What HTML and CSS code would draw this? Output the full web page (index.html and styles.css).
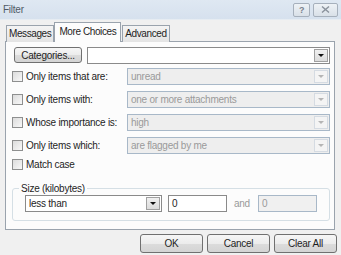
FILE: index.html
```html
<!DOCTYPE html>
<html lang="en">
<head>
  <meta charset="UTF-8" />
  <title>Filter</title>
  <link rel="stylesheet" href="styles.css">
</head>
<body>
  <div class="window">
    <header class="titlebar">
      <span class="title">Filter</span>
      <div class="caption-btns">
        <span class="cap-btn help">?</span>
        <span class="cap-btn close">
          <svg width="9" height="7" viewBox="0 0 9 7"><path d="M1 0.5 L8 6.5 M8 0.5 L1 6.5" stroke="#8a929c" stroke-width="1.4" fill="none"/></svg>
        </span>
      </div>
    </header>

    <div class="content">
      <ul class="tabs">
        <li class="tab">Messages</li>
        <li class="tab active">More Choices</li>
        <li class="tab">Advanced</li>
      </ul>

      <section class="panel">
        <div class="cat-row">
          <button class="btn small">Categories...</button>
          <div class="combo enabled">
            <span class="combo-text"></span>
            <span class="arrow dark"></span>
          </div>
        </div>

        <div class="row">
          <label class="check"><span class="box"></span>Only items that are:</label>
          <div class="combo disabled"><span class="combo-text">unread</span><span class="arrow"></span></div>
        </div>
        <div class="row">
          <label class="check"><span class="box"></span>Only items with:</label>
          <div class="combo disabled"><span class="combo-text">one or more attachments</span><span class="arrow"></span></div>
        </div>
        <div class="row">
          <label class="check"><span class="box"></span>Whose importance is:</label>
          <div class="combo disabled"><span class="combo-text">high</span><span class="arrow"></span></div>
        </div>
        <div class="row">
          <label class="check"><span class="box"></span>Only items which:</label>
          <div class="combo disabled"><span class="combo-text">are flagged by me</span><span class="arrow"></span></div>
        </div>
        <div class="row short">
          <label class="check"><span class="box"></span>Match case</label>
        </div>

        <fieldset class="group">
          <legend>Size (kilobytes)</legend>
          <div class="size-row">
            <div class="combo enabled size-combo"><span class="combo-text">less than</span><span class="arrow dark"></span></div>
            <div class="field">0</div>
            <span class="and">and</span>
            <div class="field off">0</div>
          </div>
        </fieldset>
      </section>

      <div class="actions">
        <button class="btn">OK</button>
        <button class="btn">Cancel</button>
        <button class="btn">Clear All</button>
      </div>
    </div>
  </div>
</body>
</html>
```

FILE: styles.css
```css
* {
  box-sizing: border-box;
  margin: 0;
  padding: 0;
}

body {
  font-family: 'Liberation Sans', Arial, sans-serif;
  font-size: 10px;
  letter-spacing: -0.25px;
  color: #1e1e1e;
  background: #f0f0f0;
}

.window {
  width: 341px;
  height: 255px;
  display: flex;
  flex-direction: column;
  background: #f0f0f0;
}

/* Title bar */
.titlebar {
  height: 20px;
  display: flex;
  align-items: center;
  justify-content: space-between;
  padding: 0 3px 0 3px;
  background: linear-gradient(#dfe8f2, #d6e1ee);
  border-bottom: 1px solid #e6ecf2;
}
.title {
  font-size: 10px;
  color: #505a66;
}
.caption-btns {
  display: flex;
  gap: 3px;
}
.cap-btn {
  height: 14px;
  display: flex;
  align-items: center;
  justify-content: center;
  border: 1px solid #a6b0bc;
  border-radius: 2px;
  background: linear-gradient(#eef2f6, #d9e0e8);
  color: #7a828c;
  font-size: 9px;
  font-weight: bold;
}
.help { width: 17px; }
.close { width: 25px; }

/* Body */
.content {
  flex: 1;
  padding: 2px 6px 0 5px;
  display: flex;
  flex-direction: column;
}

.tabs {
  list-style: none;
  display: flex;
  align-items: flex-end;
  height: 20px;
  padding-left: 1px;
  position: relative;
  z-index: 1;
}
.tab {
  height: 17px;
  padding: 2px 2px 0;
  border: 1px solid #9aa3ad;
  border-bottom: none;
  background: linear-gradient(#f4f4f4, #e4e4e4);
  letter-spacing: -0.4px;
  margin-right: -1px;
}
.tab.active {
  height: 20px;
  padding: 3px 4px 0;
  background: #fcfcfc;
  margin: 0 1px 0 1px;
}

.panel {
  height: 189px;
  margin-top: -1px;
  border: 1px solid #9aa3ad;
  background: #fcfcfc;
  padding: 5px 4px 0 6px;
  display: flex;
  flex-direction: column;
}

.cat-row {
  display: flex;
  align-items: center;
  gap: 5px;
  padding-left: 2px;
  height: 16px;
  margin-bottom: 5px;
}

.btn {
  font-family: inherit;
  font-size: 10px;
  letter-spacing: -0.25px;
  color: #1e1e1e;
  border: 1px solid #707070;
  border-radius: 3px;
  background: linear-gradient(#f6f6f6 0%, #ececec 50%, #dcdcdc 51%, #d4d4d4 100%);
  height: 19px;
  width: 63px;
}
.btn.small {
  width: 68px;
  height: 16px;
}

.combo {
  flex: 1;
  height: 17px;
  display: flex;
  align-items: center;
  justify-content: space-between;
  padding: 0 1px 0 3px;
  border: 1px solid #a8b8c8;
  background: #eeeeee;
  color: #9a9a9a;
}
.combo.enabled {
  border-color: #8a8a8a;
  background: #fff;
  color: #1e1e1e;
}
.arrow {
  width: 14px;
  height: 13px;
  display: flex;
  align-items: center;
  justify-content: center;
  border: 1px solid #d5dbe2;
  background: #f4f4f4;
}
.arrow::after {
  content: '';
  border-left: 3px solid transparent;
  border-right: 3px solid transparent;
  border-top: 3px solid #b5b5b5;
}
.arrow.dark {
  border-color: #a0a0a0;
  background: linear-gradient(#f0f0f0, #dcdcdc);
}
.arrow.dark::after {
  border-top-color: #111;
}

.row {
  display: flex;
  align-items: center;
  height: 17px;
  margin-bottom: 6px;
}
.row.short {
  height: 13px;
  margin-top: -2px;
  margin-bottom: 12px;
}
.check {
  width: 115px;
  display: flex;
  align-items: center;
  gap: 3px;
}
.box {
  width: 11px;
  height: 11px;
  border: 1px solid #8e8f8f;
  background: linear-gradient(135deg, #dcdcdc, #f8f8f8);
}

.group {
  border: 1px solid #d5dfe5;
  border-radius: 3px;
  padding: 0 8px 0 12px;
  height: 38px;
}
.group legend {
  padding: 0 2px;
  margin-left: -6px;
}
.size-row {
  display: flex;
  align-items: center;
  gap: 6px;
  margin-top: 1px;
}
.size-combo {
  flex: none;
  width: 137px;
}
.field {
  width: 59px;
  height: 17px;
  border: 1px solid #8a8a8a;
  background: #fff;
  padding: 2px 3px;
}
.field.off {
  border-color: #a8b8c8;
  background: #f0f0f0;
  color: #9a9a9a;
}
.and {
  color: #9a9a9a;
  padding: 0 2px 0 1px;
}

.actions {
  display: flex;
  justify-content: flex-end;
  gap: 4px;
  padding-top: 4px;
  margin-right: -2px;
}
```
